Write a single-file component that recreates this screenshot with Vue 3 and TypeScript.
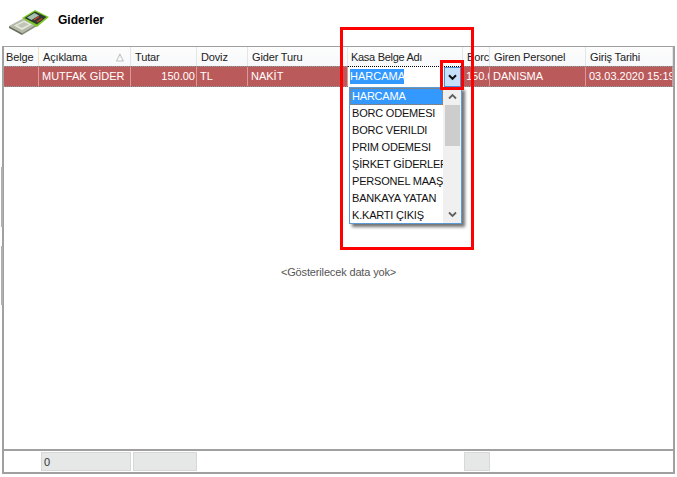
<script setup lang="ts">
interface Col { label: string; width: number; cell: string; right?: boolean }
const cols: Col[] = [
  { label: 'Belge', width: 35, cell: '' },
  { label: 'Açıklama', width: 92, cell: 'MUTFAK GİDER' },
  { label: 'Tutar', width: 66, cell: '150.00', right: true },
  { label: 'Doviz', width: 51, cell: 'TL' },
  { label: 'Gider Turu', width: 100, cell: 'NAKİT' },
  { label: 'Kasa Belge Adı', width: 115, cell: '' },
  { label: 'Borc', width: 27, cell: '150.00' },
  { label: 'Giren Personel', width: 96, cell: 'DANISMA' },
  { label: 'Giriş Tarihi', width: 87, cell: '03.03.2020 15:19' }
]
const options = ['HARCAMA', 'BORC ODEMESI', 'BORC VERILDI', 'PRIM ODEMESI', 'ŞİRKET GİDERLERİ', 'PERSONEL MAAŞI', 'BANKAYA YATAN', 'K.KARTI ÇIKIŞ']
</script>

<template>
  <div class="page">
    <header class="title">
      <svg class="logo" width="42" height="30" viewBox="0 0 42 30">
        <path d="M0 20 L15 12 L28 18 L13 27 Z" fill="#b4baa8" />
        <path d="M0 20 L13 27 L13 29 L0 22 Z" fill="#666d5e" />
        <path d="M13 27 L28 18 L28 20 L13 29 Z" fill="#858c7b" />
        <path d="M5 19.5 L15 14.5 L23 18.5 L13 24 Z" fill="#e6e9dd" />
        <path d="M8 19.5 L15 16 L20 18.5 L13 22 Z" fill="#c0c5b5" />
        <path d="M13 12 L26 4 L40 11 L28 21 Z" fill="#7ccb24" />
        <path d="M15.5 12 L26 5.5 L37.5 11 L28 18.5 Z" fill="#2f3a32" />
        <path d="M18 11.5 L25.5 7 L30 9.5 L22.5 14 Z" fill="#a6c2b0" />
        <path d="M25 14 L30 10.5 M28 16 L33 12.5" stroke="#c9402f" stroke-width="1.5" />
      </svg>
      <span class="title-text">Giderler</span>
    </header>

    <section class="grid">
      <div class="head">
        <div
          v-for="c in cols"
          :key="c.label"
          class="hcell"
          :class="{ first: c.label === 'Belge', kasa: c.label === 'Kasa Belge Adı' }"
          :style="{ width: c.width + 'px' }"
        >
          <span>{{ c.label }}</span>
          <span v-if="c.label === 'Açıklama'" class="sort">△</span>
        </div>
      </div>
      <div class="row">
        <div
          v-for="c in cols"
          :key="c.label"
          class="cell"
          :class="{ right: c.right, editor: c.label === 'Kasa Belge Adı' }"
          :style="{ width: c.width + 'px' }"
        >
          <template v-if="c.label === 'Kasa Belge Adı'">
            <span class="selected">HARCAMA</span>
            <span class="drop-btn">
              <svg width="9" height="7" viewBox="0 0 9 7"><path d="M1 1.2 L4.5 4.8 L8 1.2" fill="none" stroke="#111" stroke-width="2" /></svg>
            </span>
          </template>
          <template v-else>{{ c.cell }}</template>
        </div>
      </div>
      <div class="body">
        <span class="empty">&lt;Gösterilecek data yok&gt;</span>
      </div>
      <footer class="foot">
        <div class="fbox f1">0</div>
        <div class="fbox f2"></div>
        <div class="fbox f3"></div>
      </footer>
    </section>

    <div class="list">
      <div class="items">
        <div v-for="(o, i) in options" :key="o" class="item" :class="{ active: i === 0 }">{{ o }}</div>
      </div>
      <div class="scroll">
        <svg width="9" height="7" viewBox="0 0 9 7"><path d="M1 5.5 L4.5 2 L8 5.5" fill="none" stroke="#606060" stroke-width="1.8" /></svg>
        <div class="thumb"></div>
        <svg class="down" width="9" height="7" viewBox="0 0 9 7"><path d="M1 1.5 L4.5 5 L8 1.5" fill="none" stroke="#606060" stroke-width="1.8" /></svg>
      </div>
    </div>
    <div class="edge e1"></div>
    <div class="edge e2"></div>
    <div class="mark big"></div>
    <div class="mark small"></div>
  </div>
</template>

<style>
html, body { margin: 0; background: #fff; }
</style>

<style scoped>
.page {
  position: relative;
  width: 677px;
  height: 477px;
  background: #fff;
  overflow: hidden;
  font-family: "Liberation Sans", Arial, sans-serif;
  font-size: 11px;
  color: #000;
}
.title {
  height: 46px;
  box-sizing: border-box;
  padding: 6px 0 0 9px;
  display: flex;
  align-items: flex-start;
}
.logo { display: block; }
.title-text {
  margin: 6px 0 0 7px;
  font-weight: 700;
  font-size: 12px;
  line-height: 16px;
}
.grid {
  width: 673px;
  height: 428px;
  margin-left: 2px;
  box-sizing: border-box;
  border: 2px solid #a0a0a0;
  border-width: 1px 2px 2px 2px;
  display: flex;
  flex-direction: column;
}
.head { display: flex; height: 19px; background: linear-gradient(#fdfdfd, #f7f8fa); flex: none; }
.hcell {
  flex: none;
  box-sizing: border-box;
  padding: 2px 0 0 4px;
  line-height: 16px;
  color: #222;
  letter-spacing: -0.15px;
  border-right: 1px solid #e3e5e8;
  white-space: nowrap;
  overflow: hidden;
  display: flex;
  justify-content: space-between;
}
.hcell.first { padding-left: 2px; border-right-color: #f0e2b8; }
.hcell.kasa { padding-left: 3px; letter-spacing: -0.3px; }
.sort { color: #9a9a9a; font-size: 10px; padding-right: 6px; }
.row {
  display: flex;
  height: 21px;
  flex: none;
  background: #bb5a5a;
  border-top: 1px dotted #7fa6a6;
  border-bottom: 1px dotted #7fa6a6;
  box-sizing: border-box;
  color: #fff;
}
.cell {
  flex: none;
  box-sizing: border-box;
  padding: 0 0 0 3px;
  line-height: 19px;
  border-right: 1px solid #d79a9a;
  white-space: nowrap;
  overflow: hidden;
}
.cell.right { text-align: right; padding: 0 1px 0 0; }
.cell.editor {
  background: #fff;
  color: #000;
  display: flex;
  justify-content: space-between;
  padding: 0 2px 0 2px;
  border: none;
  border-top: 1px dotted #000;
  margin-top: -1px;
  height: 21px;
}
.selected {
  background: #3399ff;
  color: #fff;
  height: 15px;
  line-height: 15px;
  margin-top: 2px;
  width: 54px;
}
.drop-btn {
  width: 17px;
  height: 20px;
  background: #c8e1fb;
  border: 1px solid #4a90d9;
  box-sizing: border-box;
  display: flex;
  align-items: center;
  justify-content: center;
}
.body {
  flex: 1;
  display: flex;
  justify-content: center;
  align-items: flex-start;
  background: #fff;
}
.empty { margin-top: 177px; color: #555; letter-spacing: -0.15px; line-height: 16px; }
.foot {
  height: 23px;
  flex: none;
  border-top: 2px solid #a0a0a0;
  box-sizing: border-box;
  display: flex;
  padding: 1px 0 0 37px;
  gap: 2px;
}
.fbox {
  height: 19px;
  box-sizing: border-box;
  background: #e6e8e8;
  border: 1px solid #d8d8d8;
  padding-left: 2px;
  line-height: 18px;
  color: #333;
}
.f1 { width: 90px; }
.f2 { width: 64px; }
.f3 { width: 26px; margin-left: 265px; }

.list {
  position: absolute;
  left: 349px;
  top: 87px;
  width: 113px;
  height: 137px;
  box-sizing: border-box;
  background: #fff;
  border: 1px solid #5b9bd5;
  box-shadow: 3px 3px 3px rgba(0, 0, 0, 0.55);
  display: flex;
}
.items { width: 93px; overflow: hidden; }
.item {
  height: 17px;
  line-height: 17px;
  padding: 0 2px;
  white-space: nowrap;
  overflow: hidden;
  color: #111;
  letter-spacing: -0.2px;
  box-sizing: border-box;
}
.item.active { background: #3399ff; color: #fff; outline: 1px dotted #c07020; outline-offset: -1px; }
.scroll {
  flex: 1;
  background: #f0f0f0;
  display: flex;
  flex-direction: column;
  align-items: center;
  padding-top: 5px;
  box-sizing: border-box;
}
.thumb { width: 15px; height: 41px; background: #cdcdcd; margin-top: 5px; }
.down { margin-top: auto; margin-bottom: 5px; }
.edge { position: absolute; left: 1px; width: 2px; background: #b0b0b0; }
.e1 { top: 167px; height: 60px; }
.e2 { top: 246px; height: 59px; }
.mark { position: absolute; border: 3px solid #ff0000; box-sizing: border-box; }
.big { left: 340px; top: 27px; width: 134px; height: 223px; }
.small { left: 440px; top: 60px; width: 24px; height: 30px; }
</style>
